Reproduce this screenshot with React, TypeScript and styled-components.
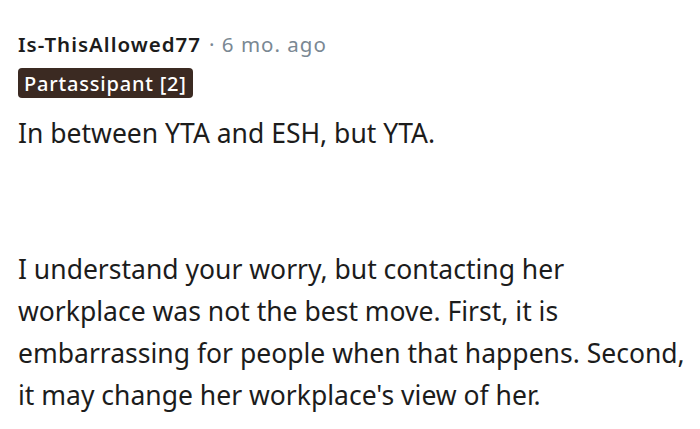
import React from "react";
import styled, { createGlobalStyle } from "styled-components";

const Global = createGlobalStyle`
  html, body { margin: 0; padding: 0; background: #ffffff; }
  body { font-family: "Noto Sans", "Open Sans", sans-serif; }
`;

const Comment = styled.div`
  padding: 30px 0 0 18px;
  width: 690px;
  box-sizing: border-box;
`;

const Meta = styled.div`
  display: flex;
  align-items: baseline;
  font-size: 20.5px;
  line-height: 28px;
  letter-spacing: 1px;
  white-space: nowrap;
`;

const Author = styled.span`
  font-weight: 600;
  color: #1c1c1c;
`;

const Time = styled.span`
  color: #7a8893;
  margin-left: 8px;
`;

const Flair = styled.span`
  display: inline-flex;
  align-items: center;
  height: 30px;
  padding: 0 6px;
  margin-top: 10px;
  border-radius: 4px;
  background: #3b2a22;
  color: #ffffff;
  font-size: 20px;
  letter-spacing: 0.8px;
  font-weight: 500;
`;

const Body = styled.div`
  margin-top: 14px;
  width: 672px;
  color: #1c1c1c;
  font-size: 26.5px;
  line-height: 42px;
`;

const Para = styled.p<{ $gap?: number }>`
  margin: 0;
  margin-top: ${(p) => p.$gap ?? 0}px;
`;

export default function App() {
  return (
    <>
      <Global />
      <Comment>
        <Meta>
          <Author>Is-ThisAllowed77</Author>
          <Time>· 6 mo. ago</Time>
        </Meta>
        <Flair>Partassipant [2]</Flair>
        <Body>
          <Para>In between YTA and ESH, but YTA.</Para>
          <Para $gap={94}>
            I understand your worry, but contacting her workplace was not the best move. First, it is embarrassing for people when that happens. Second, it may change her workplace's view of her.
          </Para>
        </Body>
      </Comment>
    </>
  );
}
